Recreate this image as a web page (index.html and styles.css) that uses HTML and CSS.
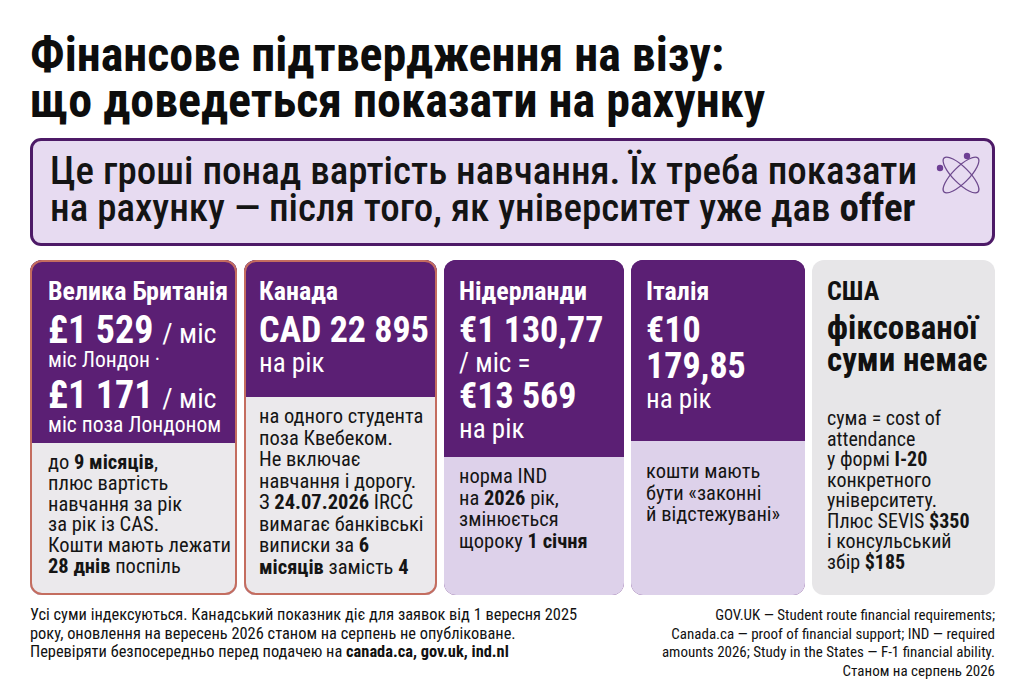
FILE: index.html
```html
<!DOCTYPE html>
<html lang="uk">
<head>
<meta charset="utf-8">
<title>Фінансове підтвердження на візу</title>
<link rel="stylesheet" href="styles.css">
</head>
<body>
<div class="page">
  <h1 class="title">Фінансове підтвердження на візу:<br>що доведеться показати на рахунку</h1>

  <div class="callout">
    <p class="callout-text">Це гроші понад вартість навчання. Їх треба показати<br>на рахунку — після того, як університет уже дав <b>offer</b></p>
    <svg class="atom" viewBox="0 0 50 50" width="50" height="50" aria-hidden="true">
      <ellipse cx="25" cy="25" rx="24" ry="8" transform="rotate(45 25 25)" fill="none" stroke="#6e4a8e" stroke-width="1.3"/>
      <ellipse cx="25" cy="25" rx="24" ry="8" transform="rotate(-45 25 25)" fill="none" stroke="#6e4a8e" stroke-width="1.3"/>
      <circle cx="31" cy="6" r="3.2" fill="#6e3f94"/>
      <circle cx="4" cy="18" r="3.2" fill="#6e3f94"/>
    </svg>
  </div>

  <div class="cards">
    <div class="card framed first">
      <div class="card-top pb6">
        <div class="country">Велика Британія</div>
        <div class="amount">£1 529 <span class="unit">/ міс</span></div>
        <div class="sub">міс Лондон ·</div>
        <div class="amount second">£1 171 <span class="unit">/ міс</span></div>
        <div class="sub">міс поза Лондоном</div>
      </div>
      <div class="card-body gray">
        до <b>9 місяців</b>,<br>плюс вартість<br>навчання за рік<br>за рік із CAS.<br>Кошти мають лежати<br><b>28 днів</b> поспіль
      </div>
    </div>

    <div class="card framed">
      <div class="card-top pb19">
        <div class="country">Канада</div>
        <div class="amount">CAD 22 895</div>
        <div class="sub big">на рік</div>
      </div>
      <div class="card-body gray">
        на одного студента<br>поза Квебеком.<br>Не включає<br>навчання і дорогу.<br>З <b>24.07.2026</b> IRCC<br>вимагає банківські<br>виписки за <b>6</b><br><b>місяців</b> замість <b>4</b>
      </div>
    </div>

    <div class="card">
      <div class="card-top pb13">
        <div class="country">Нідерланди</div>
        <div class="amount">€1 130,77</div>
        <div class="sub big">/ міс =</div>
        <div class="amount">€13 569</div>
        <div class="sub big">на рік</div>
      </div>
      <div class="card-body lav">
        норма IND<br>на <b>2026</b> рік,<br>змінюється<br>щороку <b>1 січня</b>
      </div>
    </div>

    <div class="card">
      <div class="card-top pb27">
        <div class="country">Італія</div>
        <div class="amount">€10</div>
        <div class="amount">179,85</div>
        <div class="sub big">на рік</div>
      </div>
      <div class="card-body lav pt20">
        кошти мають<br>бути «законні<br>й відстежувані»
      </div>
    </div>

    <div class="card plain">
      <div class="plain-top">
        <div class="country dark">США</div>
        <div class="nofix">фіксованої<br>суми немає</div>
      </div>
      <div class="card-body plain-body">
        сума = cost of<br>attendance<br>у формі <b>I-20</b><br>конкретного<br>університету.<br>Плюс SEVIS <b>$350</b><br>і консульський<br>збір <b>$185</b>
      </div>
    </div>
  </div>

  <div class="footer">
    <p class="foot-left">Усі суми індексуються. Канадський показник діє для заявок від 1 вересня 2025<br>року, оновлення на вересень 2026 станом на серпень не опубліковане.<br>Перевіряти безпосередньо перед подачею на <b>canada.ca, gov.uk, ind.nl</b></p>
    <p class="foot-right">GOV.UK — Student route financial requirements;<br>Canada.ca — proof of financial support; IND — required<br>amounts 2026; Study in the States — F-1 financial ability.<br>Станом на серпень 2026</p>
  </div>
</div>
</body>
</html>
```

FILE: styles.css
```css
* { box-sizing: border-box; }

body {
  margin: 0;
  background: #ffffff;
  color: #111111;
  font-family: "Roboto Condensed", Roboto, "Liberation Sans", sans-serif;
}

.page {
  width: 1024px;
  height: 687px;
  padding: 32px 29px 0 30px;
  overflow: hidden;
}

.title {
  margin: 0;
  font-size: 48px;
  line-height: 46px;
  font-weight: 700;
  color: #0d0d0d;
}

.callout {
  margin-top: 14px;
  height: 108px;
  border: 3px solid #4d1a67;
  border-radius: 11px;
  background: #e7dbf1;
  padding: 12px 6px 0 17px;
  display: flex;
  justify-content: space-between;
  align-items: flex-start;
}

.callout-text {
  margin: 0;
  font-size: 39px;
  line-height: 37px;
  font-weight: 500;
  color: #141414;
  white-space: nowrap;
}

.callout-text b { font-weight: 700; }

.atom { margin-top: -3px; flex: none; }

.cards {
  margin-top: 14px;
  display: grid;
  grid-template-columns: 207px 193px 180px 174px 183px;
  column-gap: 7px;
  height: 335px;
}

.card {
  border-radius: 12px;
  overflow: hidden;
  display: flex;
  flex-direction: column;
  background: #5b1f74;
}

.card.framed {
  outline: 2px solid #c46d5f;
  outline-offset: -2px;
}

.card-top {
  background: #5b1f74;
  color: #ffffff;
  padding: 17px 8px 12px 15px;
}

.first .card-top,
.first .card-body { padding-left: 18px; }

.pb6 { padding-bottom: 6px; }
.pb13 { padding-bottom: 13px; }
.pb19 { padding-bottom: 19px; }
.pb27 { padding-bottom: 27px; }

.country {
  font-size: 26px;
  line-height: 28px;
  font-weight: 700;
  margin-bottom: 7px;
  white-space: nowrap;
}

.country.dark { color: #111111; }

.amount {
  font-size: 36px;
  line-height: 36px;
  font-weight: 700;
  white-space: nowrap;
}

.first .amount { font-size: 38px; }

.amount.second { margin-top: 5px; }

.unit {
  font-size: 28px;
  line-height: 0;
  font-weight: 400;
}

.sub {
  font-size: 23px;
  line-height: 24px;
  font-weight: 400;
  white-space: nowrap;
}

.first .sub { font-size: 21.5px; }

.sub.big {
  font-size: 27px;
  line-height: 30px;
}

.card-body {
  flex: 1;
  padding: 9px 4px 0 15px;
  font-size: 20.5px;
  line-height: 21.5px;
  color: #151515;
  white-space: nowrap;
}

.first .card-body { line-height: 20.8px; }

.card-body b { font-weight: 700; }

.card-body.gray { background: #ebe9ec; }
.card-body.lav { background: #ddd1ea; }
.card-body.pt20 { padding-top: 20px; }

.card.plain { background: #e7e6e8; }

.plain-top {
  padding: 17px 6px 0 15px;
}

.nofix {
  font-size: 33px;
  line-height: 32px;
  font-weight: 700;
  color: #111111;
  white-space: nowrap;
}

.plain-body {
  padding-top: 32px;
  font-size: 20px;
  line-height: 20.5px;
}

.footer {
  margin-top: 11px;
  display: flex;
  justify-content: space-between;
  align-items: flex-start;
}

.foot-left, .foot-right {
  margin: 0;
  line-height: 18.5px;
  color: #111111;
}

.foot-left { font-size: 16.4px; }
.foot-left b { font-weight: 700; }

.foot-right {
  font-size: 15px;
  text-align: right;
}
```
